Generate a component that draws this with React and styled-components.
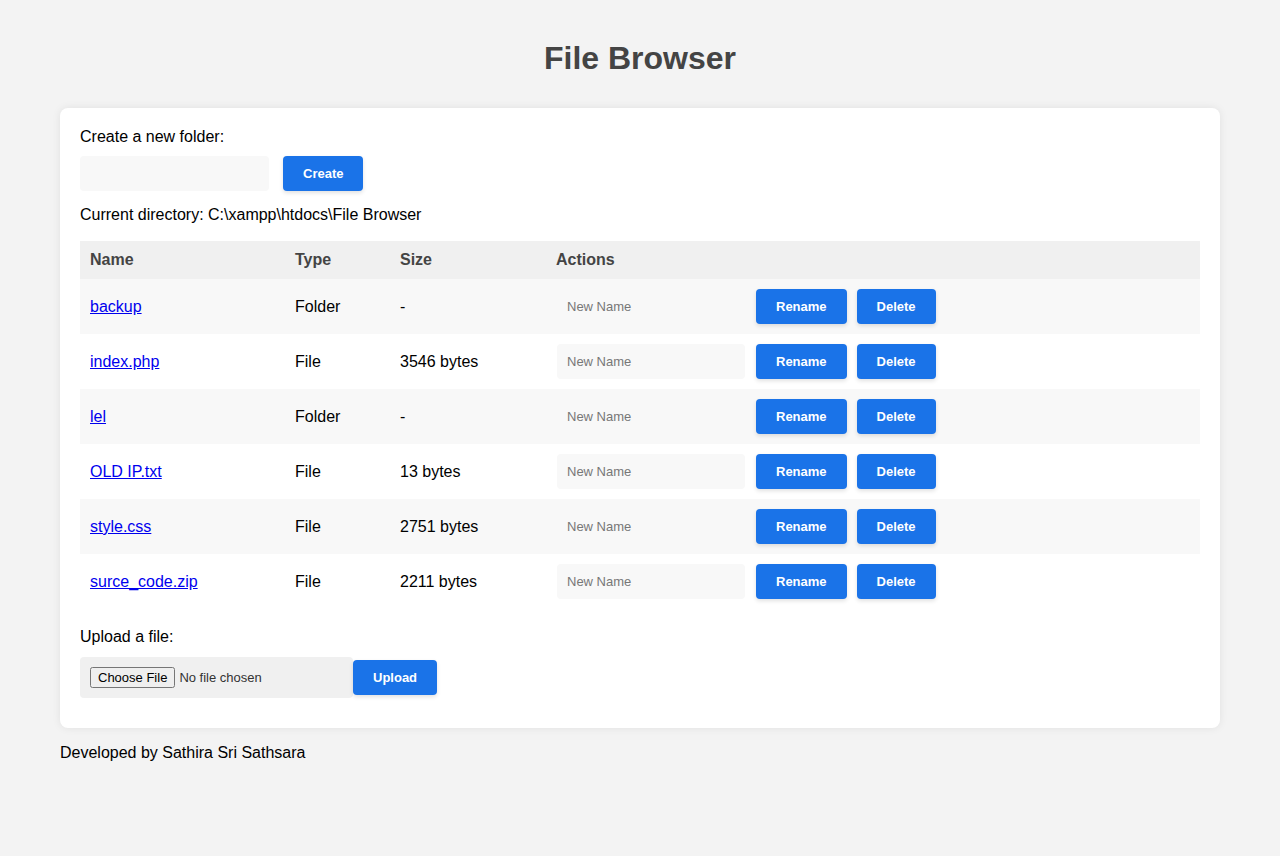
import React from "react";
import styled, { createGlobalStyle } from "styled-components";

const GlobalStyle = createGlobalStyle`
  html, body {
    margin: 0;
    padding: 0;
    background: #f3f3f3;
    font-family: "Liberation Sans", Arial, sans-serif;
    font-size: 16px;
    color: #000;
  }
`;

const Page = styled.div`
  width: 1160px;
  margin: 0 auto;
  padding-top: 40px;
`;

const Title = styled.h1`
  margin: 0 0 31px;
  height: 37px;
  line-height: 37px;
  font-size: 32px;
  font-weight: bold;
  text-align: center;
  color: #444;
`;

const Card = styled.div`
  background: #fff;
  border-radius: 8px;
  box-shadow: 0 0 8px rgba(0, 0, 0, 0.08);
  padding: 20px 20px 30px;
`;

const Label = styled.div`
  line-height: 18px;
  margin: ${(p) => p.$margin || "0"};
`;

const Row = styled.div`
  display: flex;
  align-items: center;
  gap: ${(p) => p.$gap || "0px"};
`;

const TextInput = styled.input`
  box-sizing: border-box;
  width: ${(p) => p.$width || "188px"};
  height: 35px;
  padding: 10px;
  border: none;
  border-radius: 4px;
  background: #f8f8f8;
  font-family: "Liberation Sans", Arial, sans-serif;
  font-size: 13px;
  outline: none;
  &::placeholder {
    color: #777;
  }
`;

const Button = styled.button`
  height: 35px;
  padding: 0 20px;
  border: none;
  border-radius: 4px;
  background: #1a73e8;
  color: #fff;
  font-family: "Liberation Sans", Arial, sans-serif;
  font-size: 13px;
  font-weight: bold;
  box-shadow: 0 2px 4px rgba(0, 0, 0, 0.12);
  cursor: pointer;
`;

const Table = styled.table`
  width: 100%;
  border-collapse: collapse;
  table-layout: fixed;
`;

const Th = styled.th`
  width: ${(p) => p.$width || "auto"};
  background: #f0f0f0;
  color: #444;
  font-weight: bold;
  text-align: left;
  padding: 10px;
  line-height: 18px;
`;

const Tr = styled.tr`
  height: 55px;
  background: ${(p) => (p.$striped ? "#f8f8f8" : "#fff")};
`;

const Td = styled.td`
  padding: 0 10px;
  line-height: 18px;
  vertical-align: middle;
`;

const ActionCell = styled.td`
  padding: 10px;
  padding-left: 11px;
`;

const Link = styled.a`
  color: #0000ee;
  text-decoration: underline;
`;

const FileBox = styled.div`
  box-sizing: border-box;
  width: 273px;
  height: 41px;
  padding: 10px;
  background: #f0f0f0;
  border-radius: 4px;
  display: flex;
  align-items: center;
`;

const FileInput = styled.input`
  font-family: "Liberation Sans", Arial, sans-serif;
  font-size: 13px;
  color: #333;
  width: 253px;
`;

const Footer = styled.div`
  margin-top: 16px;
  line-height: 18px;
`;

const files = [
  { name: "backup", type: "Folder", size: "-" },
  { name: "index.php", type: "File", size: "3546 bytes" },
  { name: "lel", type: "Folder", size: "-" },
  { name: "OLD IP.txt", type: "File", size: "13 bytes" },
  { name: "style.css", type: "File", size: "2751 bytes" },
  { name: "surce_code.zip", type: "File", size: "2211 bytes" },
];

export default function App() {
  return (
    <>
      <GlobalStyle />
      <Page>
        <Title>File Browser</Title>
        <Card>
          <Label>Create a new folder:</Label>
          <Row $gap="14px" style={{ marginTop: 10 }}>
            <TextInput $width="189px" />
            <Button>Create</Button>
          </Row>
          <Label $margin="15px 0 17px">Current directory: C:\xampp\htdocs\File Browser</Label>
          <Table>
            <thead>
              <tr>
                <Th $width="185px">Name</Th>
                <Th $width="85px">Type</Th>
                <Th $width="136px">Size</Th>
                <Th>Actions</Th>
              </tr>
            </thead>
            <tbody>
              {files.map((f, i) => (
                <Tr key={f.name} $striped={i % 2 === 0}>
                  <Td>
                    <Link href="#">{f.name}</Link>
                  </Td>
                  <Td>{f.type}</Td>
                  <Td>{f.size}</Td>
                  <ActionCell>
                    <Row $gap="10px">
                      <TextInput placeholder="New Name" style={{ marginRight: 1 }} />
                      <Button>Rename</Button>
                      <Button>Delete</Button>
                    </Row>
                  </ActionCell>
                </Tr>
              ))}
            </tbody>
          </Table>
          <Label $margin="19px 0 11px">Upload a file:</Label>
          <Row>
            <FileBox>
              <FileInput type="file" />
            </FileBox>
            <Button>Upload</Button>
          </Row>
        </Card>
        <Footer>Developed by Sathira Sri Sathsara</Footer>
      </Page>
    </>
  );
}
